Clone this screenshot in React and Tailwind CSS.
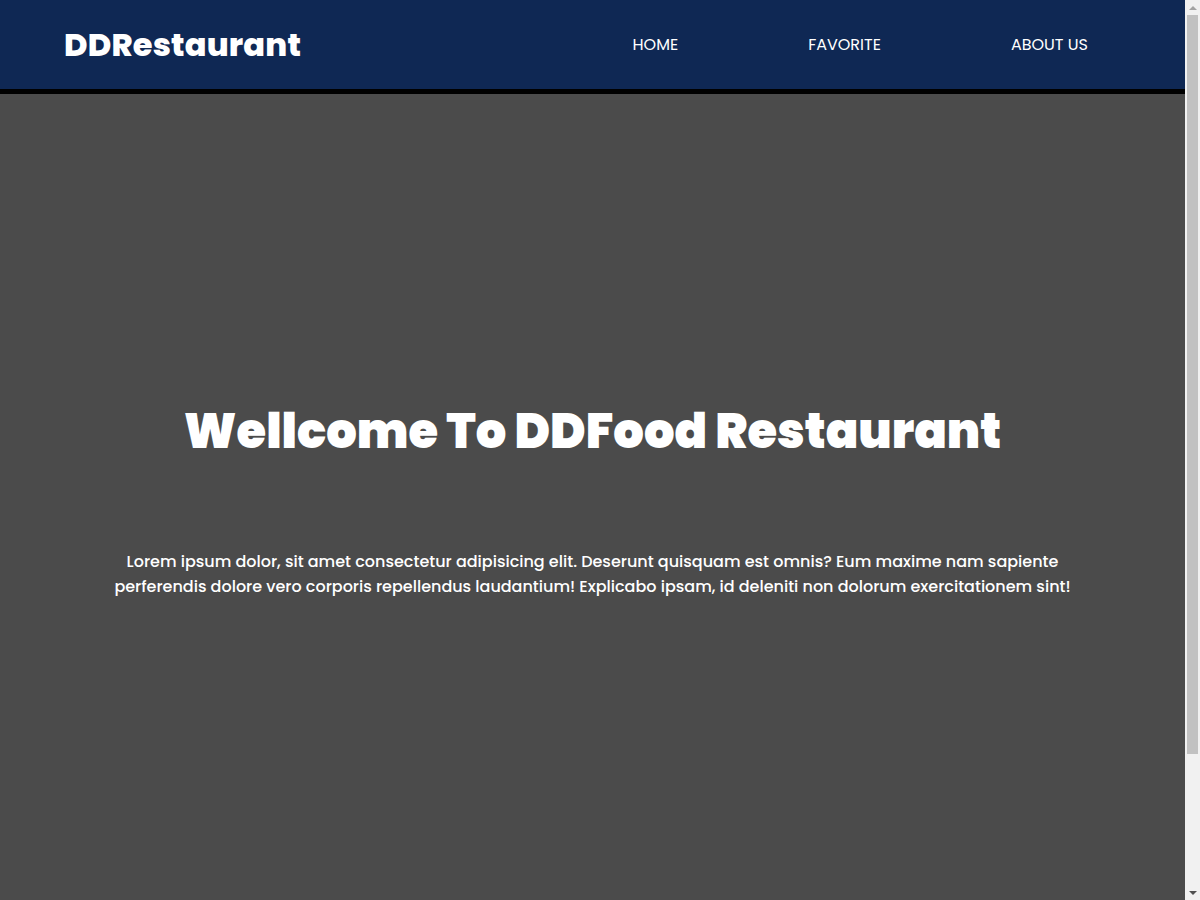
export default function App() {
  const links = ['HOME', 'FAVORITE', 'ABOUT US']

  return (
    <div className="h-screen flex overflow-hidden bg-[#4b4b4b] text-white font-['Poppins','Inter',sans-serif]">
      <main className="flex-1 min-w-0">
        <header className="h-[94px] bg-[#0f2854] border-b-[5px] border-black flex items-center justify-between pl-16 pr-[97px]">
          <h1 className="text-[32px] font-extrabold leading-none tracking-[0.2px]">DDRestaurant</h1>
          <nav className="flex items-center gap-[130px]">
            {links.map((l) => (
              <a key={l} href="#" className="text-[16px] font-normal leading-none">
                {l}
              </a>
            ))}
          </nav>
        </header>

        <section className="h-[965px] flex flex-col items-center pt-[303px]">
          <h2 className="text-[48px] font-black leading-[70px]">Wellcome To DDFood Restaurant</h2>
          <p className="mt-[82px] w-[970px] text-center text-[16px] font-medium leading-[25px]">
            Lorem ipsum dolor, sit amet consectetur adipisicing elit. Deserunt quisquam est omnis? Eum maxime nam sapiente perferendis dolore vero corporis repellendus laudantium! Explicabo ipsam, id deleniti non dolorum exercitationem sint!
          </p>
        </section>
      </main>

      {/* scrollbar */}
      <aside className="w-[15px] shrink-0 bg-[#f1f1f1] flex flex-col">
        <div className="h-[15px] flex items-center justify-center">
          <div className="w-0 h-0 border-x-[4px] border-x-transparent border-b-[4px] border-b-[#a3a3a3]" />
        </div>
        <div className="flex-1 px-[2px]">
          <div className="h-[739px] bg-[#c1c1c1]" />
        </div>
        <div className="h-[15px] flex items-center justify-center">
          <div className="w-0 h-0 border-x-[4px] border-x-transparent border-t-[4px] border-t-[#505050]" />
        </div>
      </aside>
    </div>
  )
}
